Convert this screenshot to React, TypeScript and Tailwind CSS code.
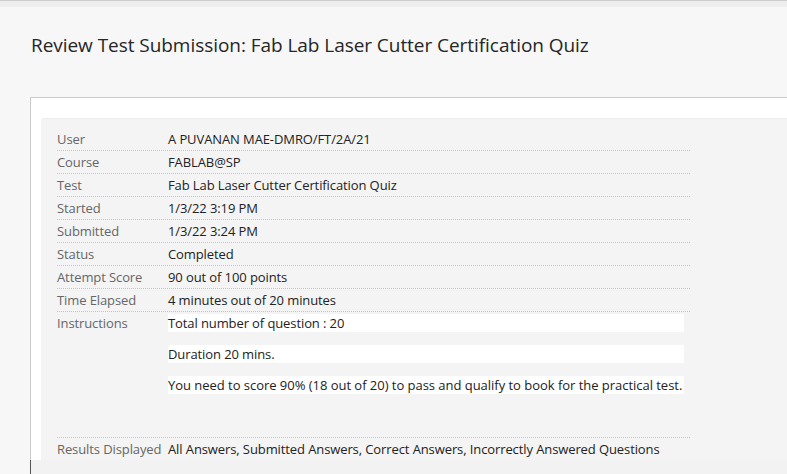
import React from "react";

const rows: [string, string][] = [
  ["User", "A PUVANAN MAE-DMRO/FT/2A/21"],
  ["Course", "FABLAB@SP"],
  ["Test", "Fab Lab Laser Cutter Certification Quiz"],
  ["Started", "1/3/22 3:19 PM"],
  ["Submitted", "1/3/22 3:24 PM"],
  ["Status", "Completed"],
  ["Attempt Score", "90 out of 100 points"],
  ["Time Elapsed", "4 minutes out of 20 minutes"],
];

export default function App() {
  return (
    <div
      className="min-h-[474px] h-[474px] overflow-hidden bg-[#f7f7f7] flex flex-col"
      style={{ fontFamily: '"Open Sans", "Noto Sans", sans-serif' }}
    >
      <div className="h-[1px] bg-[#cccccc]" />
      <div className="h-[6px] bg-[#eeeeee]" />
      <h1 className="pl-[31px] pt-[25px] text-[19px] leading-[26px] tracking-[-0.05px] text-[#262626]">
        Review Test Submission: Fab Lab Laser Cutter Certification Quiz
      </h1>
      <div className="mt-[39px] ml-[30px] border-l border-t border-[#cccccc] bg-white pt-[20px] pl-[10px]">
        <div className="bg-[#f4f4f4] rounded-tl-[3px] border-t border-[#ececec] pt-[9px] pl-[16px]">
          <div className="w-[633px] text-[13px] leading-[18px] tracking-[-0.1px]">
            {rows.map(([k, v]) => (
              <div key={k} className="flex border-b border-dotted border-[#c4c4c4] py-[2px]">
                <div className="w-[111px] shrink-0 text-[#666666]">{k}</div>
                <div className="text-[#222222]">{v}</div>
              </div>
            ))}
            <div className="flex border-b border-dotted border-[#c4c4c4] pt-[2px] pb-[43px]">
              <div className="w-[111px] shrink-0 text-[#666666]">Instructions</div>
              <div className="flex flex-col gap-[13px] text-[#222222] w-[516px]">
                <p className="bg-white whitespace-nowrap">Total number of question : 20</p>
                <p className="bg-white whitespace-nowrap">Duration 20 mins.</p>
                <p className="bg-white whitespace-nowrap tracking-[-0.03px]">
                  You need to score 90% (18 out of 20) to pass and qualify to book for the practical test.
                </p>
              </div>
            </div>
            <div className="flex py-[2px]">
              <div className="w-[111px] shrink-0 text-[#666666] whitespace-nowrap">Results Displayed</div>
              <div className="text-[#222222] whitespace-nowrap">
                All Answers, Submitted Answers, Correct Answers, Incorrectly Answered Questions
              </div>
            </div>
          </div>
        </div>
      </div>
      <div className="flex-1 ml-[30px] border-l border-[#555555] bg-[#f2f2f2]" />
    </div>
  );
}
